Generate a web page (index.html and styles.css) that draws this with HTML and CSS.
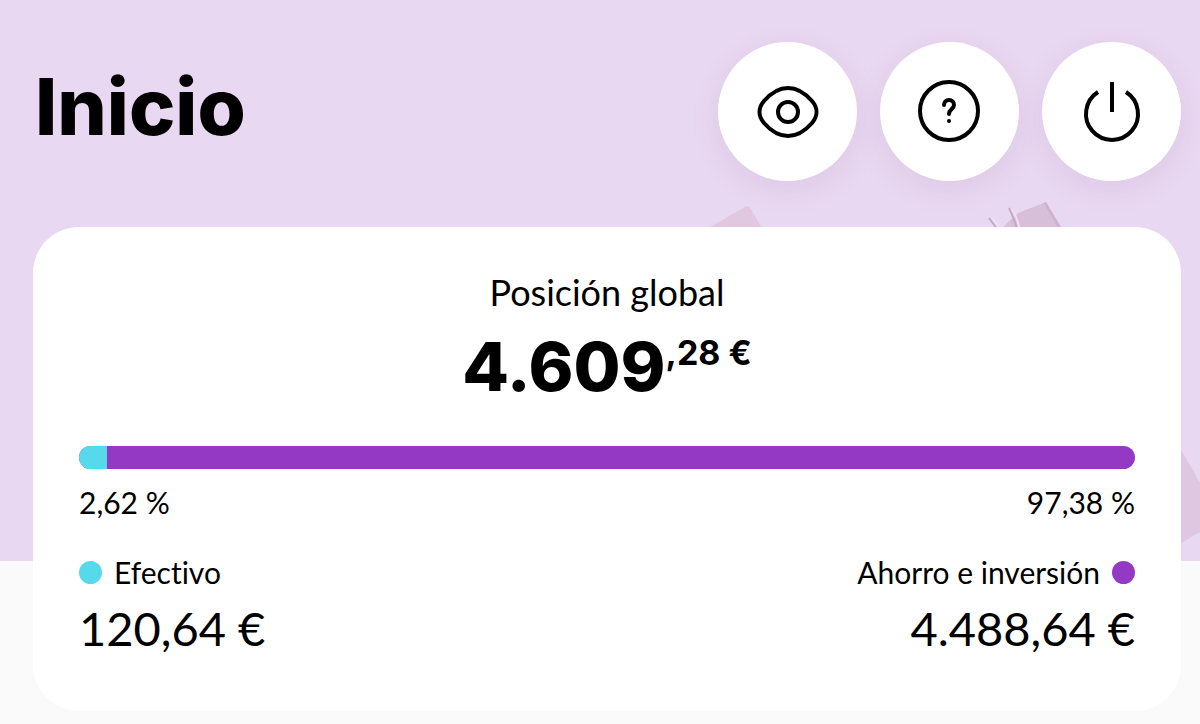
FILE: index.html
```html
<!DOCTYPE html>
<html lang="es">
<head>
    <meta charset="UTF-8">
    <meta name="viewport" content="width=device-width, initial-scale=1.0">
    <title>Inicio</title>

    <link rel="stylesheet" href="styles.css">
</head>
<body>
    <div class="backdrop" aria-hidden="true">
        <svg class="shapes" width="520" height="561" viewBox="680 0 520 561">
            <path fill="#dfc8e0" d="M705 230L745 207Q749 205 751 209L763 230Z"/>
            <path fill="#d8bfd9" d="M1000 230L1018 213L1046 202L1063 230Z"/>
            <path fill="#cdb2cf" d="M1044 203L1046 202L1062 230H1059Z"/>
            <path fill="none" stroke="#c3a9c5" stroke-width="2" d="M989 218L998 230M1009 208Q1015 220 1017 230"/>
            <path fill="none" stroke="#f0dff2" stroke-width="2" d="M992 218L1001 230M1012 209Q1018 220 1020 230"/>
            <path fill="#dfc7e2" d="M1176 441L1200 483V532L1176 546Z"/>
        </svg>
    </div>

    <header class="header">
        <h1 class="title">Inicio</h1>
        <nav class="actions">
            <button class="action" type="button" aria-label="Ocultar importes">
                <svg width="64" height="64" viewBox="0 0 64 64">
                    <path d="M32 8C41 8 49 13 56 21C62 28 62 36 56 43C49 51 41 56 32 56C23 56 15 51 8 43C2 36 2 28 8 21C15 13 23 8 32 8Z"/>
                    <circle cx="32" cy="32" r="10"/>
                </svg>
            </button>
            <button class="action" type="button" aria-label="Ayuda">
                <svg width="64" height="64" viewBox="0 0 64 64">
                    <circle cx="31" cy="31" r="29"/>
                    <path stroke-linecap="round" d="M26 25C26 22 28 20 31 20C34 20 36 22 36 25C36 29 31 29 31 34"/>
                    <circle class="dot" cx="31" cy="41" r="2"/>
                </svg>
            </button>
            <button class="action" type="button" aria-label="Salir">
                <svg width="64" height="64" viewBox="0 0 64 64">
                    <path d="M18 12A26 26 0 1 0 46 12M32 2V32"/>
                </svg>
            </button>
        </nav>
    </header>

    <main class="card">
        <h2 class="card-title">Posición global</h2>
        <p class="total">4.609<span class="cents">,28 €</span></p>

        <div class="bar">
            <div class="bar-cash" style="width: 2.62%"></div>
        </div>
        <div class="row percents">
            <span>2,62 %</span>
            <span>97,38 %</span>
        </div>

        <div class="row">
            <div class="item">
                <p class="label"><span class="bullet cash"></span>Efectivo</p>
                <p class="amount">120,64 €</p>
            </div>
            <div class="item right">
                <p class="label">Ahorro e inversión<span class="bullet savings"></span></p>
                <p class="amount">4.488,64 €</p>
            </div>
        </div>
    </main>
</body>
</html>
```
FILE: styles.css
```css
*, *::before, *::after {
    box-sizing: border-box;
}

body {
    --cash: #57d9ec;
    --savings: #9439c4;
    position: relative;
    margin: 0;
    font-family: Lato, sans-serif;
    font-variant-ligatures: none;
    color: #000;
    background-color: #fafafa;
}

h1, h2, p {
    margin: 0;
}

.backdrop {
    position: absolute;
    top: 0;
    right: 0;
    left: 0;
    z-index: -1;
    height: 561px;
    overflow: hidden;
    background-color: #e9d8f1;
}

.shapes {
    display: block;
    margin-left: auto;
}

.header {
    display: flex;
    justify-content: space-between;
    align-items: flex-start;
    padding: 42px 19px 46px 35px;
}

.title {
    font-family: Inter, sans-serif;
    font-size: 78px;
    font-weight: 800;
    line-height: 130px;
}

.actions {
    display: flex;
    gap: 23px;
}

.action {
    display: flex;
    justify-content: center;
    align-items: center;
    width: 139px;
    height: 139px;
    padding: 0;
    border: none;
    border-radius: 50%;
    color: inherit;
    background-color: #fff;
    box-shadow: 0 8px 30px rgba(120, 70, 150, 0.1);
    cursor: pointer;
}

.action svg {
    fill: none;
    stroke: currentColor;
    stroke-width: 4;
}

.action .dot {
    fill: currentColor;
    stroke: none;
}

.card {
    margin: 0 19px 13px 33px;
    padding: 43px 46px 54px;
    border-radius: 46px;
    background-color: #fff;
}

.card-title {
    font-size: 36px;
    font-weight: 400;
    line-height: 44px;
    text-align: center;
}

.total {
    display: flex;
    justify-content: center;
    margin-top: 12px;
    font-family: Inter, sans-serif;
    font-size: 68px;
    font-weight: 800;
    line-height: 80px;
}

.cents {
    font-size: 34px;
    font-weight: 700;
    line-height: 54px;
}

.bar {
    height: 23px;
    margin-top: 40px;
    border-radius: 12px;
    overflow: hidden;
    background-color: var(--savings);
}

.bar-cash {
    height: 100%;
    background-color: var(--cash);
}

.row {
    display: flex;
    justify-content: space-between;
    font-size: 30px;
    line-height: 34px;
}

.percents {
    margin-top: 16px;
    margin-bottom: 36px;
}

.label {
    display: flex;
    align-items: center;
    gap: 12px;
}

.bullet {
    width: 23px;
    height: 23px;
    border-radius: 50%;
}

.cash {
    background-color: var(--cash);
}

.savings {
    background-color: var(--savings);
}

.amount {
    margin-top: 10px;
    font-size: 47px;
    line-height: 58px;
}

.right .label {
    justify-content: flex-end;
}

.right .amount {
    text-align: right;
}
```
